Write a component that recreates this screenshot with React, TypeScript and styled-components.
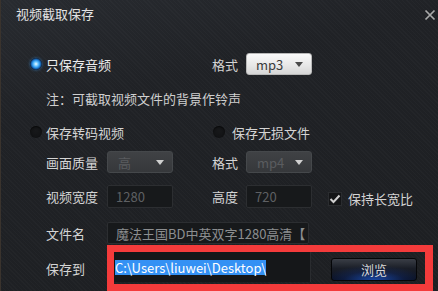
import React from 'react';
import styled, { createGlobalStyle } from 'styled-components';

const GlobalStyle = createGlobalStyle`
  html, body {
    margin: 0;
    padding: 0;
    background: #1f2124;
  }
  body {
    font-family: "Noto Sans CJK SC", "Noto Sans", sans-serif;
  }
`;

const Window = styled.div`
  position: relative;
  width: 438px;
  height: 291px;
  overflow: hidden;
  box-sizing: border-box;
  border-left: 1px solid #3a332d;
  background:
    repeating-linear-gradient(45deg, rgba(255, 255, 255, 0.018) 0 1px, transparent 1px 3px),
    linear-gradient(165deg, #282b30 0%, #202226 30%, #1d1f22 100%);
  color: #d6d6d6;
  font-size: 13px;
`;

const TitleBar = styled.div`
  display: flex;
  justify-content: space-between;
  align-items: flex-start;
  height: 28px;
  padding: 0 2px 0 15px;
`;

const Title = styled.div`
  line-height: 28px;
  color: #e2e2e2;
  font-size: 13px;
`;

const CloseButton = styled.div`
  width: 12px;
  height: 12px;
  margin-top: 6px;
  color: #a9a9a9;
`;

const Body = styled.div`
  padding-left: 29px;
`;

const Row = styled.div<{ $h: number; $mt: number }>`
  display: flex;
  align-items: center;
  height: ${p => p.$h}px;
  margin-top: ${p => p.$mt}px;
`;

const Slot = styled.div<{ $w: number }>`
  flex: none;
  width: ${p => p.$w}px;
  display: flex;
  align-items: center;
`;

const Label = styled.div<{ $w: number; $bright?: boolean }>`
  flex: none;
  width: ${p => p.$w}px;
  white-space: nowrap;
  color: ${p => (p.$bright ? '#ececec' : '#d4d4d4')};
`;

const Note = styled.div`
  color: #cfcfcf;
  white-space: nowrap;
`;

const Radio = styled.div<{ $checked?: boolean }>`
  width: 12px;
  height: 12px;
  border-radius: 50%;
  background: ${p =>
    p.$checked
      ? 'radial-gradient(circle, #f0f9ff 0, #6cc8ff 25%, #1f84e0 48%, #0d2446 70%, #101418 100%)'
      : 'radial-gradient(circle at 50% 40%, #17181a 0, #0f1012 100%)'};
  box-shadow: ${p =>
    p.$checked ? '0 0 3px rgba(70, 170, 255, 0.55)' : 'inset 0 1px 1px rgba(0,0,0,0.6)'};
`;

const Select = styled.div<{ $disabled?: boolean; $w: number }>`
  flex: none;
  box-sizing: border-box;
  width: ${p => p.$w}px;
  height: 22px;
  display: flex;
  align-items: center;
  justify-content: space-between;
  padding: 0 8px 0 ${p => (p.$disabled ? 10 : 9)}px;
  border-radius: 3px;
  border: 1px solid ${p => (p.$disabled ? '#45484b' : '#b9b9b9')};
  background: ${p =>
    p.$disabled
      ? 'linear-gradient(#404245, #36383b)'
      : 'linear-gradient(#fafafa, #e6e6e6 60%, #d6d6d6)'};
  color: ${p => (p.$disabled ? '#5a5c5f' : '#3a3a3a')};
  font-size: 13px;
`;

const Arrow = styled.div<{ $disabled?: boolean }>`
  width: 0;
  height: 0;
  border-left: 4px solid transparent;
  border-right: 4px solid transparent;
  border-top: 5px solid ${p => (p.$disabled ? '#d0d0d0' : '#4a4a4a')};
`;

const Input = styled.div<{ $w: number; $h: number; $color: string }>`
  flex: none;
  box-sizing: border-box;
  width: ${p => p.$w}px;
  height: ${p => p.$h}px;
  display: flex;
  align-items: center;
  padding-left: 8px;
  border: 1px solid #2c2e31;
  border-radius: 2px;
  background: #17191b;
  color: ${p => p.$color};
  white-space: nowrap;
  overflow: hidden;
`;

const CheckWrap = styled.div`
  display: flex;
  align-items: center;
  align-self: flex-end;
  margin-left: 16px;
  margin-bottom: 0;
  gap: 6px;
`;

const CheckBox = styled.div`
  width: 14px;
  height: 14px;
  box-sizing: border-box;
  border: 1px solid #2a2c2f;
  background: #141517;
  display: flex;
  align-items: center;
  justify-content: center;
`;

const Highlight = styled.div`
  flex: none;
  box-sizing: border-box;
  width: 326px;
  height: 46px;
  border: 7px solid #f43b3b;
  border-right-width: 8px;
  display: flex;
  align-items: flex-start;
`;

const PathInput = styled.div`
  flex: none;
  box-sizing: border-box;
  width: 197px;
  height: 30px;
  display: flex;
  align-items: center;
  padding-left: 1px;
  background: #151719;
  border-right: 1px solid #2a2c2f;
`;

const Selected = styled.span`
  background: #3491f4;
  color: #ffffff;
  line-height: 15px;
  white-space: nowrap;
`;

const BrowseButton = styled.div`
  flex: none;
  box-sizing: border-box;
  width: 86px;
  height: 23px;
  margin: 6px 0 0 20px;
  display: flex;
  align-items: center;
  justify-content: center;
  border: 1px solid #050608;
  border-radius: 3px;
  background:
    radial-gradient(ellipse 60% 70% at 50% 100%, rgba(30, 90, 210, 0.75) 0%, rgba(20, 60, 160, 0.25) 60%, transparent 100%),
    linear-gradient(#3a3e46, #1a1e27 45%, #0a0f1c);
  color: #d8d8d8;
  font-size: 13px;
`;

export default function App() {
  return (
    <>
      <GlobalStyle />
      <Window>
        <TitleBar>
          <Title>视频截取保存</Title>
          <CloseButton>
            <svg width="12" height="12" viewBox="0 0 12 12">
              <path d="M1.5 1.5 L10.5 10.5 M10.5 1.5 L1.5 10.5" stroke="currentColor" strokeWidth="1.7" />
            </svg>
          </CloseButton>
        </TitleBar>
        <Body>
          <Row $h={22} $mt={25}>
            <Slot $w={16}><Radio $checked /></Slot>
            <Label $w={166} $bright>只保存音频</Label>
            <Label $w={34}>格式</Label>
            <Select $w={66}>mp3<Arrow /></Select>
          </Row>
          <Row $h={22} $mt={12}>
            <Slot $w={16} />
            <Note>注：可截取视频文件的背景作铃声</Note>
          </Row>
          <Row $h={22} $mt={12}>
            <Slot $w={16}><Radio /></Slot>
            <Label $w={167}>保存转码视频</Label>
            <Slot $w={19}><Radio /></Slot>
            <Label $w={100}>保存无损文件</Label>
          </Row>
          <Row $h={22} $mt={8}>
            <Slot $w={16} />
            <Label $w={61}>画面质量</Label>
            <Select $w={66} $disabled>高<Arrow $disabled /></Select>
            <Slot $w={39} />
            <Label $w={34}>格式</Label>
            <Select $w={66} $disabled>mp4<Arrow $disabled /></Select>
          </Row>
          <Row $h={23} $mt={12}>
            <Slot $w={16} />
            <Label $w={61}>视频宽度</Label>
            <Input $w={66} $h={23} $color="#5e6063">1280</Input>
            <Slot $w={39} />
            <Label $w={34}>高度</Label>
            <Input $w={66} $h={23} $color="#5e6063">720</Input>
            <CheckWrap>
              <CheckBox>
                <svg width="12" height="10" viewBox="0 0 12 10">
                  <path d="M1.5 5 L4.5 8 L10.5 1.5" fill="none" stroke="#cfcfcf" strokeWidth="2" />
                </svg>
              </CheckBox>
              <Label $w={70}>保持长宽比</Label>
            </CheckWrap>
          </Row>
          <Row $h={22} $mt={14}>
            <Slot $w={16} />
            <Label $w={61}>文件名</Label>
            <Input $w={202} $h={22} $color="#8c8e90">魔法王国BD中英双字1280高清【</Input>
          </Row>
          <Row $h={46} $mt={1}>
            <Slot $w={16} />
            <Label $w={61}>保存到</Label>
            <Highlight>
              <PathInput>
                <Selected>C:\Users\liuwei\Desktop\</Selected>
              </PathInput>
              <BrowseButton>浏览</BrowseButton>
            </Highlight>
          </Row>
        </Body>
      </Window>
    </>
  );
}
